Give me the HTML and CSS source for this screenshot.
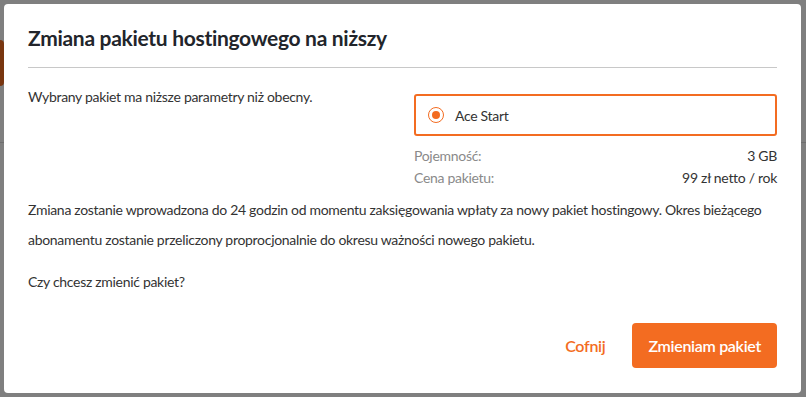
FILE: index.html
```html
<!DOCTYPE html>
<html lang="pl">
<head>
    <meta charset="UTF-8">
    <meta name="viewport" content="width=device-width, initial-scale=1.0">
    <title>Zmiana pakietu hostingowego</title>
    <link rel="stylesheet" href="styles.css">
</head>
<body>
    <div class="page">
        <header class="page-header">
            <div class="page-tab"></div>
        </header>
    </div>
    <div class="overlay"></div>

    <div class="modal">
        <h1 class="modal-title">Zmiana pakietu hostingowego na niższy</h1>
        <div class="modal-body">
            <div class="summary">
                <p class="summary-text">Wybrany pakiet ma niższe parametry niż obecny.</p>
                <div class="package">
                    <label class="package-option">
                        <span class="radio"></span>
                        <span class="package-name">Ace Start</span>
                    </label>
                    <div class="package-row">
                        <span class="row-label">Pojemność:</span>
                        <span class="row-value">3 GB</span>
                    </div>
                    <div class="package-row">
                        <span class="row-label">Cena pakietu:</span>
                        <span class="row-value">99 zł netto / rok</span>
                    </div>
                </div>
            </div>
            <p class="info">Zmiana zostanie wprowadzona do 24 godzin od momentu zaksięgowania wpłaty za nowy pakiet hostingowy. Okres bieżącego abonamentu zostanie przeliczony proprocjonalnie do okresu ważności nowego pakietu.</p>
            <p class="question">Czy chcesz zmienić pakiet?</p>
        </div>
        <div class="modal-actions">
            <button class="btn-link" type="button">Cofnij</button>
            <button class="btn-primary" type="button">Zmieniam pakiet</button>
        </div>
    </div>
</body>
</html>
```

FILE: styles.css
```css
body {
    margin: 0;
    font-family: 'Lato', 'Open Sans', sans-serif;
    background-color: #fff;
    height: 100vh;
    overflow: hidden;
}
.page-header {
    height: 143px;
    box-sizing: border-box;
    padding-top: 40px;
    border-bottom: 1px solid #ddd;
}
.page-tab {
    width: 8px;
    height: 46px;
    margin-left: -4px;
    background-color: #f36c21;
    border-radius: 4px;
}
.overlay {
    position: fixed;
    inset: 0;
    background-color: rgba(0, 0, 0, 0.5);
}
.modal {
    position: fixed;
    top: 4px;
    left: 4px;
    width: 797px;
    height: 389px;
    box-sizing: border-box;
    padding: 0 24px 25px;
    background-color: white;
    border-radius: 4px;
    display: flex;
    flex-direction: column;
}
.modal-title {
    margin: 0;
    padding: 22px 0 17px;
    font-size: 21px;
    font-weight: 700;
    letter-spacing: -0.3px;
    color: #22252b;
    border-bottom: 1px solid #c8c8c8;
    line-height: 24px;
}
.modal-body {
    flex: 1;
    font-size: 14px;
    letter-spacing: -0.3px;
    color: #333;
}
.summary {
    display: flex;
    justify-content: space-between;
    margin-top: 19px;
}
.summary-text {
    margin: 0;
    line-height: 20px;
}
.package {
    width: 363px;
    margin-top: 7px;
}
.package-option {
    display: flex;
    align-items: center;
    gap: 11px;
    height: 42px;
    box-sizing: border-box;
    padding: 0 12px;
    border: 2px solid #f36c21;
    border-radius: 3px;
}
.radio {
    width: 14px;
    height: 14px;
    border: 1px solid #f36c21;
    border-radius: 50%;
    position: relative;
}
.radio::after {
    content: '';
    position: absolute;
    inset: 3px;
    background-color: #f36c21;
    border-radius: 50%;
}
.package-name {
    color: #333;
}
.package-row {
    display: flex;
    justify-content: space-between;
    line-height: 22px;
}
.package-row:first-of-type {
    margin-top: 9px;
}
.row-label {
    color: #8a8a8a;
}
.info {
    margin: 6px 0 0;
    line-height: 30px;
}
.question {
    margin: 17px 0 0;
    line-height: 20px;
}
.modal-actions {
    display: flex;
    justify-content: flex-end;
    align-items: center;
    gap: 27px;
}
.btn-link {
    border: none;
    background: none;
    padding: 0;
    font: inherit;
    font-size: 16px;
    font-weight: 600;
    letter-spacing: -0.3px;
    color: #f36c21;
}
.btn-primary {
    border: none;
    background-color: #f36c21;
    color: white;
    font: inherit;
    font-size: 16px;
    font-weight: 600;
    letter-spacing: -0.3px;
    height: 45px;
    padding: 0 16px;
    border-radius: 4px;
}
```
